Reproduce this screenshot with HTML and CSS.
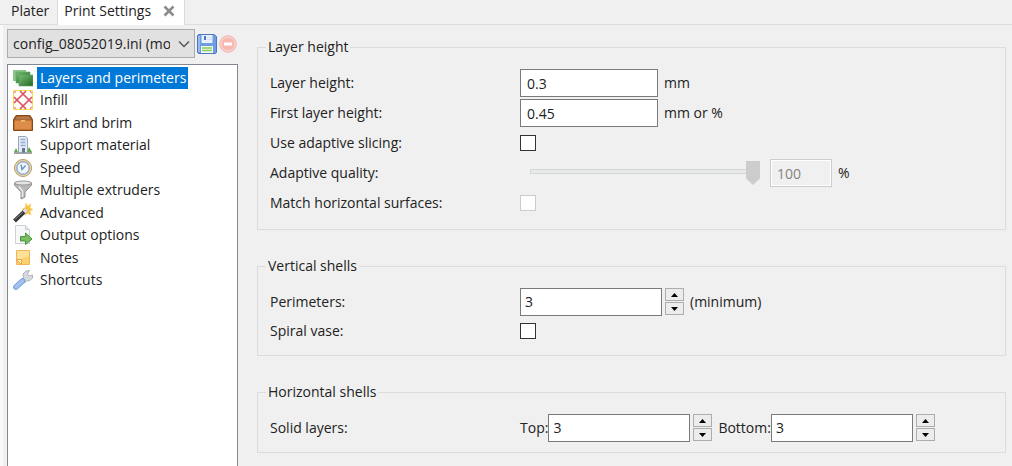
FILE: index.html
```html
<!DOCTYPE html>
<html lang="en">
<head>
<meta charset="utf-8">
<title>Print Settings</title>
<link rel="stylesheet" href="styles.css">
</head>
<body>
<div class="app">
  <nav class="tabs">
    <button class="tab" type="button">Plater</button>
    <div class="tab tab-active">
      <button class="tab-title" type="button">Print Settings</button>
      <button class="tab-close" type="button" aria-label="Close tab">
        <svg width="12" height="12" viewBox="0 0 12 12"><path d="M1.500 1.500l9 9M10.500 1.500l-9 9" stroke="#8c8c8c" stroke-width="2.600"/></svg>
      </button>
    </div>
  </nav>
  <main class="page">
    <aside class="sidebar">
      <div class="preset">
        <div class="preset-select">
          <select aria-label="Preset"><option>config_08052019.ini (modified)</option></select>
          <svg class="chevron" width="12" height="8" viewBox="0 0 12 8"><path d="M1 1.500l5 5 5-5" fill="none" stroke="#555" stroke-width="1.400"/></svg>
        </div>
        <button class="icon-button" type="button" aria-label="Save preset">
          <svg width="20" height="20" viewBox="0 0 20 20">
            <path d="M1.500.5H17l2.500 2v16l-1 1h-17l-1-1v-17z" fill="#6f9ce2" stroke="#4a76c4"/>
            <path d="M2 2v16" stroke="#a9c6f3" stroke-width="1.500"/>
            <rect x="4.500" y="1" width="11" height="8" fill="#e9f1fc"/>
            <rect x="7" y="2" width="2" height="4" fill="#4a76c4"/>
            <path d="M10 3.500h5M10 5.500h5" stroke="#d0dff5"/>
            <rect x="4" y="12" width="12" height="7" fill="#f3faeb"/>
            <path d="M5 14h10M5 16.500h10" stroke="#8ccb62" stroke-width="1.500"/>
          </svg>
        </button>
        <button class="icon-button" type="button" aria-label="Delete preset" disabled>
          <svg width="18" height="18" viewBox="0 0 18 18"><circle cx="9" cy="9" r="8.300" fill="#f8c9c4" stroke="#f3b8b3"/><circle cx="9" cy="9" r="6.800" fill="#f7b8b2" stroke="#fad6d2"/><rect x="5" y="7.500" width="8" height="3" rx=".5" fill="#fff"/></svg>
        </button>
      </div>
      <ul class="tree">
        <li class="tree-row">
          <svg class="tree-icon" viewBox="0 0 20 20"><defs><linearGradient id="leaf" x2="1" y2="1"><stop stop-color="#79bd77"/><stop offset="1" stop-color="#1f6a24"/></linearGradient></defs><path d="M0 2h13v11H0z" fill="#8cc58a"/><path d="M3 4h14v11H3z" fill="url(#leaf)" stroke="#5fa65e" stroke-width=".6"/><path d="M6 7h14v11H6z" fill="url(#leaf)" stroke="#5fa65e" stroke-width=".6"/></svg>
          <button class="tree-item selected" type="button">Layers and perimeters</button>
        </li>
        <li class="tree-row">
          <svg class="tree-icon" viewBox="0 0 20 20"><path d="M.5.500h19v19H.5z" fill="#fffdf6" stroke="#f3e04a"/><path d="M1 13L13 1M7 1l12 12M1 7l12 12M19 7L7 19" stroke="#dc5068" stroke-width="1.700"/><path d="M1 3l2-2M17 1l2 2M1 17l2 2M19 17l-2 2" stroke="#ec96a4" stroke-width="1.500"/></svg>
          <button class="tree-item" type="button">Infill</button>
        </li>
        <li class="tree-row">
          <svg class="tree-icon" viewBox="0 0 20 20"><path d="M3 2.500h14l2.500 4v11H.5v-11z" fill="#9a5a28" stroke="#81481c"/><path d="M4 3.500h12l1.500 3h-15z" fill="#b77a45"/><path d="M1.500 7.500h17v9h-17z" fill="#dc8d48" stroke="#c67531"/><path d="M8 7h4v1.500H8z" fill="#f2c182"/></svg>
          <button class="tree-item" type="button">Skirt and brim</button>
        </li>
        <li class="tree-row">
          <svg class="tree-icon" viewBox="0 0 20 20"><path d="M1 18h18" stroke="#9da49d" stroke-width="2"/><path d="M5.500 17.500V1.500h7l2 1.500v14.500z" fill="#e3ebf6" stroke="#9ba6b5"/><path d="M7.500 4.500h5M7.500 7.500h5M7.500 10.500h5" stroke="#91abd3" stroke-width="1.500"/><path d="M9 13h3v4.500H9z" fill="#66788f"/><path d="M1 17l2-4 2 4zm13 0l2-5 3 5z" fill="#62a554"/></svg>
          <button class="tree-item" type="button">Support material</button>
        </li>
        <li class="tree-row">
          <svg class="tree-icon" viewBox="0 0 20 20"><circle cx="10" cy="10" r="8.500" fill="#f0dcb0" stroke="#b8995f"/><circle cx="10" cy="10" r="6.300" fill="#eff6fd" stroke="#8fa9c8" stroke-width="1.300"/><path d="M8 6.500l1 5 3.500-4" fill="none" stroke="#6c8db3" stroke-width="1.300"/><path d="M10 4v1M10 15v1M4 10h1M15 10h1" stroke="#aaa"/></svg>
          <button class="tree-item" type="button">Speed</button>
        </li>
        <li class="tree-row">
          <svg class="tree-icon" viewBox="0 0 20 20"><path d="M1.500 3v2L8 12v7l4-2v-5l6.500-7V3z" fill="#b8b8b8" stroke="#8e8e8e"/><path d="M6 6.500l3.500 4.500v6" stroke="#e8e8e8" stroke-width="1.600" fill="none"/><ellipse cx="10" cy="3" rx="8.500" ry="2" fill="#e4e4e4" stroke="#999"/></svg>
          <button class="tree-item" type="button">Multiple extruders</button>
        </li>
        <li class="tree-row">
          <svg class="tree-icon" viewBox="0 0 20 20"><path d="M13 0l1.500 3L18 1l-1 4 3 1.500L17 8l1 4-3.500-1.500L12 12V8.500L9 6l3-1z" fill="#f8c040" stroke="#fad886"/><path d="M1.500 18L13 7" stroke="#353535" stroke-width="4"/><path d="M2 16.500l8-7.500" stroke="#8a8a8a"/><path d="M11 9l2.500-2.500" stroke="#dcdcdc" stroke-width="4"/></svg>
          <button class="tree-item" type="button">Advanced</button>
        </li>
        <li class="tree-row">
          <svg class="tree-icon" viewBox="0 0 20 20"><path d="M2.500.500h10l4 4v14h-14z" fill="#f7f8f9" stroke="#cdd1d5"/><path d="M12.500.500v4h4" fill="#e2e6ea" stroke="#cdd1d5"/><path d="M7.500 11.500h5V8l6.500 6-6.500 5.500V16h-5z" fill="#79be5e" stroke="#4a933b"/></svg>
          <button class="tree-item" type="button">Output options</button>
        </li>
        <li class="tree-row">
          <svg class="tree-icon" viewBox="0 0 20 20"><path d="M3.500 2.500h13v14h-13z" fill="#fbd16c" stroke="#f0b459"/><path d="M4 3h12v5L4 12z" fill="#fde19a"/><path d="M3.500 11.500h5v5z" fill="#fff3cc" stroke="#e9a54c"/></svg>
          <button class="tree-item" type="button">Notes</button>
        </li>
        <li class="tree-row">
          <svg class="tree-icon" viewBox="0 0 20 20"><path d="M8.500 11l2-3-.5-4L13 1l3.500-.5-2 3.500 1.500 2 3.500-1v3L17 10.500l-3.500.5-2 2z" fill="#d6dade" stroke="#a0a7ae" stroke-width=".8"/><path d="M3 17l6.500-6" stroke="#6f97d9" stroke-width="5.600" stroke-linecap="round"/><path d="M3 17l6.500-6" stroke="#a3c2f2" stroke-width="3.800" stroke-linecap="round"/></svg>
          <button class="tree-item" type="button">Shortcuts</button>
        </li>
      </ul>
    </aside>
    <form class="settings">
      <fieldset class="group group-roomy">
        <legend>Layer height</legend>
        <div class="row"><label for="layer">Layer height:</label><div class="field"><input class="text" id="layer" type="text" value="0.3"><span>mm</span></div></div>
        <div class="row"><label for="first">First layer height:</label><div class="field"><input class="text" id="first" type="text" value="0.45"><span>mm or %</span></div></div>
        <div class="row"><label for="adaptive">Use adaptive slicing:</label><div class="field"><input class="check" id="adaptive" type="checkbox"></div></div>
        <div class="row"><label for="quality">Adaptive quality:</label><div class="field"><input class="slider" id="quality" type="range" min="0" max="100" value="100" disabled><input class="text text-short" type="text" value="100" aria-label="Adaptive quality percent" disabled><span>%</span></div></div>
        <div class="row"><label for="match">Match horizontal surfaces:</label><div class="field"><input class="check" id="match" type="checkbox" disabled></div></div>
      </fieldset>
      <fieldset class="group">
        <legend>Vertical shells</legend>
        <div class="row"><label for="perimeters">Perimeters:</label><div class="field">
          <div class="spin"><input class="number" id="perimeters" type="number" value="3"><div class="steps"><button class="step" type="button" aria-label="Increase"><svg width="7" height="4" viewBox="0 0 7 4"><path d="M0 4l3.500-4L7 4z"/></svg></button><button class="step" type="button" aria-label="Decrease"><svg width="7" height="4" viewBox="0 0 7 4"><path d="M0 0l3.500 4L7 0z"/></svg></button></div></div><span>(minimum)</span></div></div>
        <div class="row"><label for="vase">Spiral vase:</label><div class="field"><input class="check" id="vase" type="checkbox"></div></div>
      </fieldset>
      <fieldset class="group">
        <legend>Horizontal shells</legend>
        <div class="row"><span>Solid layers:</span><div class="field">
          <div class="pair"><label for="top">Top:</label><div class="spin"><input class="number" id="top" type="number" value="3"><div class="steps"><button class="step" type="button" aria-label="Increase"><svg width="7" height="4" viewBox="0 0 7 4"><path d="M0 4l3.500-4L7 4z"/></svg></button><button class="step" type="button" aria-label="Decrease"><svg width="7" height="4" viewBox="0 0 7 4"><path d="M0 0l3.500 4L7 0z"/></svg></button></div></div></div>
          <div class="pair"><label for="bottom">Bottom:</label><div class="spin"><input class="number" id="bottom" type="number" value="3"><div class="steps"><button class="step" type="button" aria-label="Increase"><svg width="7" height="4" viewBox="0 0 7 4"><path d="M0 4l3.500-4L7 4z"/></svg></button><button class="step" type="button" aria-label="Decrease"><svg width="7" height="4" viewBox="0 0 7 4"><path d="M0 0l3.500 4L7 0z"/></svg></button></div></div></div>
        </div></div>
      </fieldset>
    </form>
  </main>
</div>
</body>
</html>
```
FILE: styles.css
```css
* { box-sizing: border-box; }

body {
  margin: 0;
  background: #f0f0f0;
  color: #222;
  font: 14px/20px "Open Sans", "Noto Sans", sans-serif;
}

button, input, select {
  margin: 0;
  padding: 0;
  border: 0;
  background: none;
  color: inherit;
  font: inherit;
}

svg { display: block; }

.app {
  display: flex;
  flex-direction: column;
  min-height: 100vh;
}

.tabs {
  display: flex;
  height: 25px;
  border-bottom: 1px solid #dcdcdc;
}

.tab {
  display: flex;
  align-items: center;
  padding: 0 8px 2px 11px;
}

.tab-active {
  gap: 12px;
  height: 25px;
  padding: 0 9px 4px 6px;
  background: #fff;
  border-right: 1px solid #dcdcdc;
  border-left: 1px solid #dcdcdc;
}

.page {
  display: flex;
  flex: 1;
  gap: 19px;
  padding: 4px 6px 0 4px;
  border-left: 3px solid #f9f9f9;
}

.sidebar {
  display: flex;
  flex: none;
  flex-direction: column;
  gap: 6px;
  width: 231px;
}

.preset {
  display: flex;
  align-items: center;
  gap: 2px;
  height: 29px;
}

.preset-select {
  position: relative;
  width: 188px;
}

.preset-select select {
  width: 100%;
  height: 29px;
  padding: 0 24px 0 5px;
  border: 1px solid #adadad;
  background: #e1e1e1;
  appearance: none;
}

.chevron {
  position: absolute;
  top: 11px;
  right: 5px;
  pointer-events: none;
}

.icon-button { flex: none; }

.tree {
  display: grid;
  flex: 1;
  grid-template-rows: repeat(5, 23px 22px);
  align-content: start;
  margin: 0;
  padding: 1px 5px 0;
  border: 1px solid #828790;
  border-bottom: 0;
  background: #fff;
  list-style: none;
}

.tree-row {
  display: flex;
  align-items: center;
  gap: 4px;
}

.tree-icon {
  flex: none;
  width: 20px;
  height: 20px;
}

.tree-item {
  height: 22px;
  padding: 0 3px;
  white-space: nowrap;
}

.selected {
  padding: 0 2px 0 3px;
  background: #0078d7;
  color: #fff;
}

.settings {
  display: flex;
  flex: 1;
  flex-direction: column;
  gap: 26px;
  min-width: 0;
  padding-top: 8px;
}

.group {
  min-width: 0;
  margin: 0;
  padding: 11px 12px 10px;
  border: 1px solid #dcdcdc;
}

.group legend {
  margin-left: -4px;
  padding: 0 2px;
}

.row {
  display: grid;
  grid-template-columns: 250px 1fr;
  align-items: center;
  height: 29px;
}

.group-roomy .row { height: 30px; }

.group-roomy { padding-bottom: 11px; }

.field {
  display: flex;
  align-items: center;
  gap: 6px;
}

.text, .number {
  width: 138px;
  height: 28px;
  padding: 0 6px;
  border: 1px solid #7a7a7a;
  background: #fff;
}

.number {
  width: 142px;
  padding: 0 4px;
  appearance: textfield;
}

.number::-webkit-inner-spin-button {
  margin: 0;
  appearance: none;
}

.text-short { width: 62px; }

.text:disabled {
  border-color: #ccc;
  background: #f0f0f0;
  box-shadow: inset 0 0 0 1px #fff;
  color: #838383;
}

.check {
  width: 16px;
  height: 16px;
  border: 1px solid #333;
  background: #fff;
  appearance: none;
}

.check:disabled { border-color: #ccc; }

.slider {
  width: 230px;
  height: 24px;
  margin: 0 4px 0 10px;
  appearance: none;
}

.slider::-webkit-slider-runnable-track {
  height: 24px;
  background:
    linear-gradient(#e7eaea, #e7eaea) 1px 9px / 228px 3px no-repeat,
    linear-gradient(#d6d6d6, #d6d6d6) 0 8px / 100% 5px no-repeat;
}

.slider::-webkit-slider-thumb {
  width: 14px;
  height: 24px;
  background: #ccc;
  clip-path: polygon(0 0, 100% 0, 100% 72%, 50% 100%, 0 72%);
  appearance: none;
}

.spin {
  display: flex;
  align-items: center;
  gap: 3px;
}

.steps {
  display: grid;
  gap: 1px;
}

.step {
  display: grid;
  place-items: center;
  width: 19px;
  height: 13px;
  border: 1px solid #adadad;
  background: #ececec;
}

.pair {
  display: flex;
  align-items: center;
}
```
